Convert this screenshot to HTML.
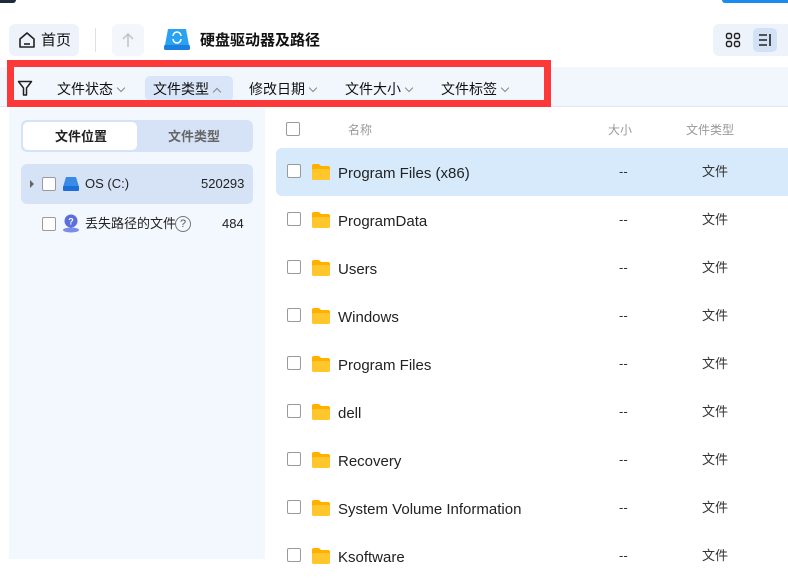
<!DOCTYPE html>
<html><head><meta charset="utf-8"><style>
*{margin:0;padding:0;box-sizing:border-box}
body{width:788px;height:559px;overflow:hidden;background:#fff;font-family:"Liberation Sans","Noto Sans CJK SC",sans-serif;position:relative;color:#222;line-height:18px}
.a{position:absolute}
.cb{position:absolute;width:14px;height:14px;border:1px solid #9a9a9a;border-radius:2px;background:#fff}
.fold{position:absolute;width:18px;height:16px}
.row{position:absolute;left:276px;width:512px;height:48px}
.row .n{position:absolute;left:62px;top:16px;font-size:15px;line-height:20px;color:#222}
.row .s{position:absolute;left:343px;top:15px;font-size:13px;line-height:18px;color:#333}
.row .t{position:absolute;left:426px;top:15px;font-size:13px;line-height:18px;color:#333}
.chev{display:inline-block;width:6px;height:6px;border-right:1.2px solid #888;border-bottom:1.2px solid #888;transform:rotate(45deg);margin-left:5px;position:relative;top:-3px}
.fi{position:absolute;top:80px;font-size:14px;color:#111}
</style></head><body>
<div class="a" style="left:0;top:0;width:16px;height:3px;background:#1d2a3a;border-radius:0 0 4px 0"></div>
<div class="a" style="left:722px;top:0;width:66px;height:3px;background:#1a8cf0;border-radius:0 0 0 3px"></div>
<div class="a" style="left:9px;top:24px;width:70px;height:32px;background:#eef3fb;border-radius:6px"></div>
<svg class="a" style="left:18px;top:31px" width="18" height="18" viewBox="0 0 18 18"><path d="M2 8 L9 2 L16 8 V16 H2 Z" fill="none" stroke="#222" stroke-width="1.6" stroke-linejoin="round"/><path d="M6 13 H12" stroke="#222" stroke-width="1.6"/></svg>
<div class="a" style="left:41px;top:31px;font-size:15px;line-height:20px;color:#111">首页</div>
<div class="a" style="left:95px;top:28px;width:1px;height:24px;background:#e0e0e0"></div>
<div class="a" style="left:112px;top:24px;width:32px;height:32px;background:#f3f6fb;border-radius:6px"></div>
<svg class="a" style="left:120px;top:31px" width="16" height="18"><path d="M8 16V3 M3 8 L8 3 L13 8" fill="none" stroke="#bcc3cc" stroke-width="1.5"/></svg>
<svg class="a" style="left:163px;top:27px" width="28" height="24" viewBox="0 0 28 24"><path d="M5 2 H23 L26 18 H2 Z" fill="#2aa2f2"/><rect x="1" y="18" width="26" height="5" rx="1.5" fill="#1a7fe0"/><path d="M10 9 A4 4 0 0 1 18 9 M18 12 A4 4 0 0 1 10 12" stroke="#fff" stroke-width="1.5" fill="none"/></svg>
<div class="a" style="left:200px;top:31px;font-size:15px;line-height:20px;font-weight:bold;color:#111">硬盘驱动器及路径</div>
<div class="a" style="left:713px;top:24px;width:75px;height:32px;background:#eef3fb;border-radius:6px 0 0 6px"></div>
<svg class="a" style="left:725px;top:32px" width="16" height="16"><rect x="1.5" y="1.5" width="5" height="5" rx="1.5" fill="none" stroke="#222" stroke-width="1.4"/><rect x="9.5" y="1.5" width="5" height="5" rx="1.5" fill="none" stroke="#222" stroke-width="1.4"/><rect x="1.5" y="9.5" width="5" height="5" rx="1.5" fill="none" stroke="#222" stroke-width="1.4"/><rect x="9.5" y="9.5" width="5" height="5" rx="1.5" fill="none" stroke="#222" stroke-width="1.4"/></svg>
<div class="a" style="left:753px;top:28px;width:24px;height:24px;background:#d3e1f6;border-radius:5px"></div>
<svg class="a" style="left:757px;top:32px" width="16" height="16"><path d="M2 3H10 M2 8H10 M2 13H10 M13 2V14" stroke="#222" stroke-width="1.6"/></svg>
<div class="a" style="left:0;top:67px;width:788px;height:40px;background:#f2f7fe;border-bottom:1px solid #e3e7ec"></div>
<div class="a" style="left:145px;top:76px;width:88px;height:25px;background:#d9e5f8;border-radius:5px"></div>
<svg class="a" style="left:17px;top:80px" width="16" height="17"><path d="M1.5 1.5 H14.5 L9.5 8 V15 H6.5 V8 Z" fill="none" stroke="#222" stroke-width="1.5" stroke-linejoin="round"/></svg>
<div class="fi" style="left:57px">文件状态<span class="chev"></span></div>
<div class="fi" style="left:153px">文件类型<span class="chev" style="transform:rotate(225deg);top:1px"></span></div>
<div class="fi" style="left:249px">修改日期<span class="chev"></span></div>
<div class="fi" style="left:345px">文件大小<span class="chev"></span></div>
<div class="fi" style="left:441px">文件标签<span class="chev"></span></div>
<div class="a" style="left:7px;top:60px;width:544px;height:47px;border:7px solid #fc3838"></div>
<div class="a" style="left:9px;top:108px;width:256px;height:451px;background:#f3f7fe"></div>
<div class="a" style="left:21px;top:120px;width:232px;height:32px;background:#d6e3f7;border-radius:6px"></div>
<div class="a" style="left:23px;top:122px;width:114px;height:28px;background:#fff;border-radius:5px"></div>
<div class="a" style="left:55px;top:128px;font-size:13px;font-weight:bold;color:#222">文件位置</div>
<div class="a" style="left:168px;top:128px;font-size:13px;font-weight:bold;color:#666">文件类型</div>
<div class="a" style="left:21px;top:164px;width:232px;height:40px;background:#d6e3f7;border-radius:6px"></div>
<div class="a" style="left:30px;top:180px;width:0;height:0;border-left:4px solid #666;border-top:4px solid transparent;border-bottom:4px solid transparent"></div>
<div class="cb" style="left:42px;top:177px"></div>
<svg class="a" style="left:62px;top:176px" width="18" height="16"><path d="M4 1 H14 L17 11 H1 Z" fill="#3a8ae8"/><rect x="1" y="10" width="16" height="5" rx="1" fill="#1a6fd8"/></svg>
<div class="a" style="left:85px;top:175px;font-size:13px;color:#222">OS (C:)</div>
<div class="a" style="left:201px;top:175px;font-size:13px;color:#222">520293</div>
<div class="cb" style="left:42px;top:217px"></div>
<svg class="a" style="left:62px;top:214px" width="18" height="19"><ellipse cx="9" cy="16" rx="8" ry="2.5" fill="#7a8ce8"/><circle cx="9" cy="7" r="6.5" fill="#5a6ee0"/><path d="M9 14 L6 11 H12 Z" fill="#5a6ee0"/><text x="9" y="10.5" font-size="9" font-weight="bold" fill="#fff" text-anchor="middle" font-family="Liberation Sans">?</text></svg>
<div class="a" style="left:85px;top:215px;font-size:13px;color:#222">丢失路径的文件</div>
<div class="a" style="left:175px;top:216px;width:16px;height:16px;border:1.2px solid #777;border-radius:50%;font-size:11px;color:#555;text-align:center;line-height:14px">?</div>
<div class="a" style="left:222px;top:215px;font-size:13px;color:#222">484</div>
<div class="cb" style="left:286px;top:122px"></div>
<div class="a" style="left:348px;top:121px;font-size:12px;color:#999">名称</div>
<div class="a" style="left:608px;top:121px;font-size:12px;color:#999">大小</div>
<div class="a" style="left:686px;top:121px;font-size:12px;color:#999">文件类型</div>
<div class="row" style="top:148px;background:#d6eafb;border-radius:6px 0 0 6px"></div>
<div id="rows"></div>
<script>
var names=["Program Files (x86)","ProgramData","Users","Windows","Program Files","dell","Recovery","System Volume Information","Ksoftware"];
var h="";
names.forEach(function(n,i){var t=148+i*48;
h+='<div class="row" style="top:'+t+'px"><div class="cb" style="left:11px;top:16px"></div><svg class="fold" style="left:36px;top:16px" viewBox="0 0 18 16"><path d="M0 2 Q0 0 2 0 H7 L9 2 H16 Q18 2 18 4 V14 Q18 16 16 16 H2 Q0 16 0 14 Z" fill="#ffb000"/><rect x="0" y="5" width="18" height="11" rx="2" fill="#ffc72c"/></svg><div class="n">'+n+'</div><div class="s">--</div><div class="t">文件</div></div>';});
document.getElementById("rows").innerHTML=h;
</script>
</body></html>
